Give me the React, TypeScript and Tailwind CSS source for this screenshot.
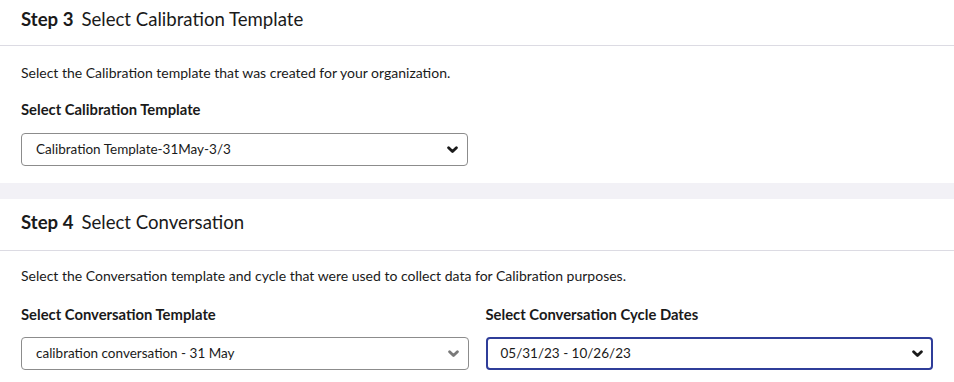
function Chevron({ muted }: { muted?: boolean }) {
  return (
    <svg width="11" height="8" viewBox="0 0 11 8" className={muted ? "text-[#7a7a7a]" : "text-[#1a1a1a]"}>
      <path d="M1.6 1.8 L5.5 5.6 L9.4 1.8" fill="none" stroke="currentColor" strokeWidth="2.8" strokeLinecap="round" strokeLinejoin="round" />
    </svg>
  );
}

function SelectBox({ value, focused, muted }: { value: string; focused?: boolean; muted?: boolean }) {
  return (
    <div
      className={`h-[33px] rounded-[4px] flex items-center justify-between text-[13.5px] text-[#1a1a1a] bg-white ${
        focused ? "border-2 border-[#2f3d99] pl-[13px] pr-[8px]" : "border border-[#8c8c8c] pl-[14px] pr-[9px]"
      }`}
    >
      <span>{value}</span>
      <Chevron muted={muted} />
    </div>
  );
}

export default function App() {
  return (
    <main className="w-[954px] h-[382px] overflow-hidden bg-white text-[#1a1a1a]" style={{ fontFamily: "Lato, 'Open Sans', sans-serif" }}>
      {/* Step 3 */}
      <section>
        <div className="h-[46px] flex items-center px-[21px] border-b border-[#dcdbe3]">
          <h2 className="text-[18.6px] leading-[22px] mt-[-8px]">
            <span className="font-bold">Step 3</span>
            <span className="ml-[8px]">Select Calibration Template</span>
          </h2>
        </div>
        <div className="px-[21px] pt-[18px] pb-[17px]">
          <p className="text-[14px] leading-[18px]">Select the Calibration template that was created for your organization.</p>
          <label className="block text-[14.8px] font-bold leading-[18px] mt-[18px]">Select Calibration Template</label>
          <div className="w-[447px] mt-[15px]">
            <SelectBox value="Calibration Template-31May-3/3" />
          </div>
        </div>
      </section>

      <div className="h-[16px] bg-[#f2f1f6]" />

      {/* Step 4 */}
      <section>
        <div className="h-[52px] flex items-center px-[21px] border-b border-[#dcdbe3]">
          <h2 className="text-[18.6px] leading-[22px] mt-[-6px]">
            <span className="font-bold">Step 4</span>
            <span className="ml-[8px]">Select Conversation</span>
          </h2>
        </div>
        <div className="px-[21px] pt-[16px]">
          <p className="text-[14px] leading-[18px]">
            Select the Conversation template and cycle that were used to collect data for Calibration purposes.
          </p>
          <div className="grid grid-cols-2 gap-x-[17px] mt-[20px]">
            <div>
              <label className="block text-[14.8px] font-bold leading-[18px]">Select Conversation Template</label>
              <div className="mt-[14px]">
                <SelectBox value="calibration conversation - 31 May" muted />
              </div>
            </div>
            <div>
              <label className="block text-[14.8px] font-bold leading-[18px]">Select Conversation Cycle Dates</label>
              <div className="mt-[14px]">
                <SelectBox value="05/31/23 - 10/26/23" focused />
              </div>
            </div>
          </div>
        </div>
      </section>
    </main>
  );
}
